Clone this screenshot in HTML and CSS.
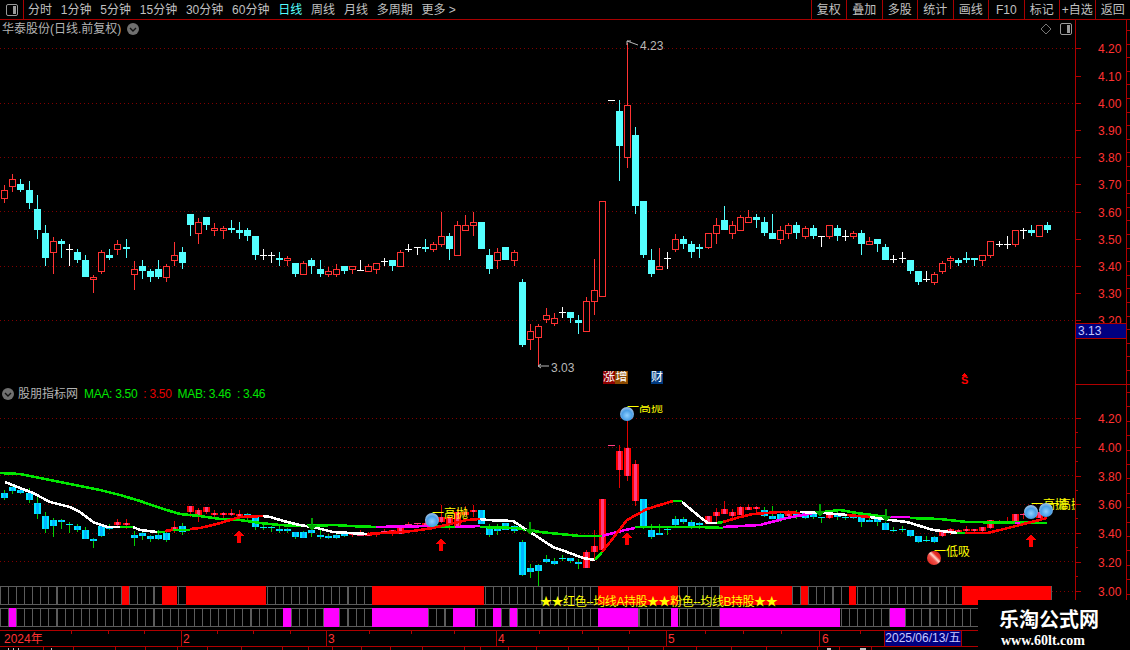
FILE: index.html
```html
<!DOCTYPE html>
<html lang="zh-CN">
<head>
<meta charset="utf-8">
<title>华泰股份 日线</title>
<link rel="stylesheet" href="styles.css">
</head>
<body>
<div class="app">
  <header class="toolbar">
    <div class="layout-btn"><svg class="panel-icon" viewBox="0 0 12 12"><rect x="0.5" y="0.5" width="11" height="11" rx="1.5"/><rect class="panel-fill" x="7" y="2" width="3" height="8"/></svg></div>
    <nav class="periods">
      <span>分时</span><span>1分钟</span><span>5分钟</span><span>15分钟</span><span>30分钟</span><span>60分钟</span><span class="active">日线</span><span>周线</span><span>月线</span><span>多周期</span><span>更多 &gt;</span>
    </nav>
    <nav class="actions">
      <span>复权</span><span>叠加</span><span>多股</span><span>统计</span><span>画线</span><span>F10</span><span>标记</span><span>+自选</span><span>返回</span>
    </nav>
  </header>

  <section class="pane pane-main">
    <div class="pane-title">
      <span class="stock-name">华泰股份(日线.前复权)</span>
      <svg class="chevron" viewBox="0 0 12 12"><circle cx="6" cy="6" r="6"/><path d="M3 5l3 3 3-3"/></svg>
    </div>
    <div class="pane-tools">
      <svg class="diamond" viewBox="0 0 12 12"><path d="M6 1l5 5-5 5-5-5z"/></svg>
      <svg class="panel-icon" viewBox="0 0 12 12"><rect x="0.5" y="0.5" width="11" height="11" rx="1.5"/><rect class="panel-fill" x="7" y="2" width="3" height="8"/></svg>
    </div>
    <svg id="main-chart" class="chart" width="1130" height="365" viewBox="0 20 1130 365"></svg>
    <div class="last-price">3.13</div>
    <div class="events">
      <span class="event event-a">涨</span><span class="event event-b">增</span><span class="event event-c">财</span>
    </div>
  </section>

  <section class="pane pane-sub">
    <div class="pane-title">
      <svg class="chevron" viewBox="0 0 12 12"><circle cx="6" cy="6" r="6"/><path d="M3 5l3 3 3-3"/></svg>
      <span class="stock-name">股朋指标网</span>
      <span class="legend green">MAA: 3.50</span><span class="legend red">: 3.50</span><span class="legend green">MAB: 3.46</span><span class="legend green">: 3.46</span>
    </div>
    <svg id="sub-chart" class="chart" width="1130" height="245" viewBox="0 385 1130 245"></svg>
    <div class="signal-note">★★红色--均线A持股★★粉色--均线B持股★★</div>
  </section>

  <section class="timeline">
    <svg id="time-axis" class="chart" width="1130" height="20" viewBox="0 630 1130 20"></svg>
    <div class="date-box">2025/06/13/五</div>
  </section>

  <aside class="watermark">
    <div class="wm-cn">乐淘公式网</div>
    <div class="wm-url">www.60lt.com</div>
  </aside>
</div>
<script src="chart.js"></script>
</body>
</html>
```

FILE: styles.css
```css
* { box-sizing: border-box; }
html, body { margin: 0; padding: 0; background: #000; }
body { font-family: "Liberation Sans", "Noto Sans CJK SC", sans-serif; font-size: 12px; color: #c0c0c0; }
.app { position: relative; width: 1130px; height: 650px; overflow: hidden; background: #000; }

.toolbar { display: flex; height: 20px; border-bottom: 1px solid #a80000; line-height: 20px; }
.layout-btn { width: 24px; display: flex; align-items: center; justify-content: center; border-right: 1px solid #a80000; }
.periods { display: flex; gap: 8.8px; padding-left: 4px; }
.periods .active { color: #54ffff; }
.actions { display: flex; margin-left: auto; }
.actions span { width: 35.5px; text-align: center; border-left: 1px solid #a80000; white-space: nowrap; }

.panel-icon { width: 12px; height: 12px; fill: none; stroke: #9a9a9a; }
.panel-fill { fill: #9a9a9a; stroke: none; }

.pane { position: relative; }
.pane-main { height: 365px; }
.pane-sub { height: 245px; }
.chart { display: block; shape-rendering: crispEdges; }
.pane-title { position: absolute; left: 2px; top: 2px; display: flex; align-items: center; height: 14px; line-height: 14px; z-index: 2; }
.pane-main .pane-title { gap: 6px; }
.stock-name { color: #b4b4b4; white-space: nowrap; }
.pane-sub .stock-name { margin: 0 6px 0 4px; }
.chevron { width: 12px; height: 12px; }
.chevron circle { fill: #707070; }
.chevron path { fill: none; stroke: #111; stroke-width: 1.4; }
.legend { margin-right: 6px; white-space: nowrap; letter-spacing: -0.3px; }
.green { color: #00e600; }
.red { color: #e60000; }
.pane-tools { position: absolute; right: 58px; top: 3px; display: flex; align-items: center; gap: 8px; z-index: 2; }
.diamond { width: 12px; height: 12px; fill: none; stroke: #777; }

.last-price { position: absolute; left: 1075px; top: 303px; width: 52px; height: 16px; padding-left: 2px; background: #000080; border: 1px solid #b00000; color: #c8c8ff; line-height: 14px; }
.events { position: absolute; left: 0; top: 351px; width: 1075px; height: 14px; }
.event { position: absolute; top: 0; width: 12px; height: 13px; line-height: 13px; text-align: center; color: #fff; overflow: hidden; font-size: 12px; }
.event-a { left: 603px; background: #900000; }
.event-b { left: 615px; width: 13px; background: #8c4a00; }
.event-c { left: 651px; background: #003a80; }

.signal-note { position: absolute; left: 540px; top: 210px; color: #ffff00; white-space: nowrap; line-height: 14px; letter-spacing: -0.45px; z-index: 2; }

.timeline { position: relative; height: 20px; }
.date-box { position: absolute; left: 884px; top: 1px; width: 78px; height: 15px; background: #000080; border-left: 1px solid #a80000; border-right: 1px solid #a80000; color: #c8c8ff; line-height: 15px; white-space: nowrap; text-align: center; }

.watermark { position: absolute; left: 978px; top: 600px; width: 152px; height: 50px; background: #000; z-index: 3; color: #fff; font-weight: 700; white-space: nowrap; }
.wm-cn { font-family: "Noto Sans CJK SC", sans-serif; font-size: 20px; line-height: 26px; margin-top: 6px; padding-left: 21px; }
.wm-url { font-family: "Liberation Serif", serif; font-size: 14px; line-height: 16px; padding-left: 23px; margin-top: 1px; }

svg text { font-family: "Liberation Sans", "Noto Sans CJK SC", sans-serif; font-size: 12px; shape-rendering: auto; }
.axis-label { fill: #ff3232; }
.tip { fill: #b8b8b8; }
.mark-label { fill: #ffff00; font-size: 12px; }
.axis-line { stroke: #b00000; fill: none; }
.grid { stroke: #800000; stroke-dasharray: 1 3; fill: none; }
.tip-line { stroke: #b8b8b8; fill: none; shape-rendering: auto; }
.dollar { fill: #ff0000; font-size: 11px; font-weight: 700; }
.ball { shape-rendering: auto; }
.ma { fill: none; stroke-width: 2.6; stroke-linejoin: round; }
.cell { fill: none; stroke: #5c5c5c; }
.arrow-up { fill: #ff0000; }
.arrow-down { fill: #00a000; }
```

FILE: chart.js
```js
// [type, high, top, bottom, low] in pixel rows of the upper pane; 0 rise, 1 fall, 2 flat
var D = [
[0,185,190,199,203],[0,174,179,187,192],[1,179,184,190,192],[1,181,190,203,209],[1,195,209,230,239],
[1,225,233,258,266],[0,237,241,253,274],[1,239,241,244,258],[2,244,249,249,266],[1,249,252,260,263],
[1,255,260,277,277],[0,275,277,280,293],[0,250,252,272,274],[1,249,255,258,260],[0,240,244,250,255],
[1,239,247,249,258],[0,261,269,275,290],[1,260,266,271,279],[1,269,271,277,282],[1,260,269,277,279],
[0,264,266,278,282],[0,242,255,261,266],[1,247,252,263,269],[1,214,214,225,236],[0,218,222,234,244],
[1,217,217,225,230],[0,223,228,231,236],[0,226,228,231,239],[1,220,228,230,233],[1,222,230,233,239],
[1,228,230,236,241],[1,236,236,255,260],[2,249,255,255,260],[2,252,255,255,263],[1,252,258,260,266],
[0,256,258,261,266],[1,263,263,274,277],[0,261,263,275,275],[1,258,260,266,274],[1,260,269,274,277],
[0,267,271,275,277],[0,264,269,275,277],[1,266,266,271,274],[0,266,266,270,274],[2,260,270,270,271],
[0,264,266,272,272],[0,263,263,270,274],[2,258,261,261,266],[1,260,260,266,271],[0,250,252,267,267],
[2,244,249,249,252],[2,247,247,247,255],[1,239,247,249,252],[0,242,244,250,252],[0,212,236,245,247],
[1,233,236,249,260],[0,221,225,256,256],[0,215,225,231,231],[0,212,222,226,236],[1,222,222,249,249],
[1,249,255,269,274],[0,248,252,261,269],[1,247,247,260,260],[0,250,252,261,266],[1,279,282,345,347],
[0,324,331,340,350],[0,324,326,338,366],[0,308,315,320,323],[0,313,318,324,326],[2,307,312,312,318],
[1,312,312,318,323],[1,315,320,323,334],[0,297,301,332,332],[0,259,290,302,315],[0,201,201,297,297],
[2,100,100,100,100],[1,100,111,146,181],[0,43,105,158,168],[1,127,135,206,214],[1,201,201,255,258],
[1,249,260,274,277],[0,248,266,270,270],[2,252,258,258,269],[0,234,239,250,252],[1,236,239,244,249],
[1,241,244,252,258],[1,244,247,249,258],[0,233,233,248,249],[0,218,225,234,244],[1,206,220,230,230],
[0,221,225,234,239],[0,215,217,231,231],[0,210,217,223,223],[1,214,217,220,228],[1,217,222,233,236],
[1,214,233,239,239],[0,226,230,240,244],[0,223,225,234,239],[1,222,225,233,239],[0,226,228,237,239],
[1,225,228,236,239],[2,236,236,236,247],[0,225,225,237,239],[1,225,228,236,241],[2,230,236,236,241],
[0,231,233,237,239],[1,230,233,244,255],[0,237,241,245,245],[1,239,239,244,252],[1,244,247,260,260],
[2,255,259,259,263],[2,252,258,258,263],[1,260,260,271,274],[1,271,271,282,285],[2,271,279,279,282],
[0,272,274,283,285],[0,261,263,272,274],[0,256,258,261,269],[1,258,260,263,266],[1,252,258,260,263],
[1,258,258,260,266],[0,255,255,261,266],[0,241,241,256,258],[2,241,244,244,247],[2,236,244,244,249],
[0,230,230,245,247],[2,228,230,230,239],[1,225,230,233,236],[0,225,225,237,237],[1,222,225,230,233]
];

// candle runs painted pink in the indicator pane
var PINK = [[14,15],[21,21],[23,29],[43,58],[72,78],[87,93],[97,97],[102,102],[116,129]];
function isPink(i) { return PINK.some(function (r) { return i >= r[0] && i <= r[1]; }); }

function X(i) { return Math.round(4.33 + i * 8.083); }
function low(y) { return Math.round(418 + (y - 48.3) * 0.5294); }
function el(tag, attrs, text) {
  var s = '<' + tag;
  for (var k in attrs) s += ' ' + k + '="' + attrs[k] + '"';
  return s + '>' + (text || '') + '</' + tag + '>';
}
function rect(x, y, w, h, fill) { return el('rect', { x: x, y: y, width: w, height: h, fill: fill }); }
function hline(x1, x2, y, cls) { return el('line', { x1: x1, x2: x2, y1: y + .5, y2: y + .5, 'class': cls }); }
function vline(x, y1, y2, cls) { return el('line', { x1: x + .5, x2: x + .5, y1: y1, y2: y2, 'class': cls }); }
function label(x, y, t, cls) { return el('text', { x: x, y: y, 'class': cls }, t); }

// ---------- upper pane ----------
var RED = '#ff3232', CYAN = '#54ffff', WHITE = '#ffffff';
var m = '';
[48, 103, 157, 211, 266, 320].forEach(function (y) { m += hline(0, 1075, y, 'grid'); });
D.forEach(function (c, i) {
  var x = X(i), col = [RED, CYAN, WHITE][c[0]];
  if (c[4] > c[1]) m += rect(x, c[1], 1, c[4] - c[1], col);
  if (c[0] === 2) m += rect(x - 3, c[2], 7, 1, col);
  else if (c[0] === 1) m += rect(x - 3, c[2], 7, c[3] - c[2], col);
  else m += rect(x - 3, c[2], 7, c[3] - c[2], '#000') +
    el('rect', { x: x - 2.5, y: c[2] + .5, width: 6, height: c[3] - c[2] - 1, fill: 'none', stroke: col });
});
// high and low tips
m += el('path', { d: 'M627 41 l11 4 M627 41 v4 M627 41 h4', 'class': 'tip-line' }) + label(640, 50, '4.23', 'tip');
m += el('path', { d: 'M538 366 h11 M538 366 l3 -2 M538 366 l3 2', 'class': 'tip-line' }) + label(551, 372, '3.03', 'tip');
// dollar event
m += el('path', { d: 'M964 373l3 3h-6z', fill: '#f00' }) + label(961, 384, 'S', 'dollar');
// axis
m += vline(1075, 20, 385, 'axis-line') + vline(1126, 20, 385, 'axis-line') + hline(0, 1130, 385, 'axis-line');
m += hline(1076, 1126, 384, 'axis-line');
for (var k = 0; k <= 10; k++) {
  var y = Math.round(48.3 + k * 27.2);
  m += hline(1075, 1081, y, 'axis-line');
  m += label(1098, y + 5, (4.2 - k * 0.1).toFixed(2), 'axis-label');
}
for (var r = 30; r < 385; r += 13.6) m += hline(1126, 1130, Math.round(r), 'axis-line');
document.getElementById('main-chart').innerHTML = m;

// ---------- lower pane ----------
var s = '';
[418, 447, 475, 504, 533, 561].forEach(function (y) { s += hline(0, 1075, y, 'grid'); });
D.forEach(function (c, i) {
  var x = X(i), t = low(c[2]), b = low(c[3]), h = low(c[1]), l = low(c[4]);
  var pink = isPink(i), H = Math.max(b - t, c[0] === 2 ? 1 : 2);
  if (l > h) s += rect(x, h, 1, l - h, pink ? '#e00000' : '#00d000');
  if (c[0] === 2) s += rect(x - 3, t, 7, 1, pink ? '#ff3c82' : '#00e8ff');
  else if (pink) s += rect(x - 3, t, 7, H, '#ff0000') + rect(x - 1, t, 3, H, '#ff3c82');
  else s += rect(x - 3, t, 7, H, '#00e8ff') + rect(x - 1, t, 3, H, '#00b4ff');
});
// moving averages, each run [colour, points]
var G1 = '#00e600', M1 = '#ff00ff', R1 = '#ff0000', W1 = '#ffffff';
var runs = [
[G1,[[0,473],[20,474],[40,478],[60,482],[80,486],[100,490],[120,495],[140,501],[160,508],[180,514],[200,516],[220,519],[240,520],[260,523],[280,525],[300,526],[335,525],[350,526],[376,527]]],
[M1,[[376,527],[430,526]]],
[G1,[[430,526],[455,527],[470,527]]],
[M1,[[455,527],[480,526]]],
[G1,[[480,527],[516,528],[540,532],[580,536],[602,536]]],
[M1,[[602,536],[625,530],[635,528]]],
[G1,[[635,527],[700,527],[723,528]]],
[M1,[[723,527],[760,525],[787,518],[813,513],[823,512]]],
[G1,[[823,512],[840,510],[857,513],[887,517]]],
[M1,[[887,517],[910,517]]],
[G1,[[910,518],[940,519],[967,522],[1047,523]]],
[M1,[[1015,523],[1020,523]]],
[W1,[[5,482],[20,488],[33,493],[50,502],[70,507],[80,512],[93,522],[107,527],[120,527]]],
[G1,[[120,527],[133,527]]],
[W1,[[133,527],[140,530],[157,532]]],
[G1,[[157,532],[165,532]]],
[R1,[[165,531],[173,530]]],
[G1,[[173,530],[190,530]]],
[R1,[[190,529],[200,528],[217,524],[230,520],[240,517],[263,516]]],
[W1,[[263,516],[270,517],[287,522],[300,525],[317,528],[333,532],[367,534]]],
[R1,[[367,534],[400,532],[413,531],[433,528],[450,524],[467,520],[480,519]]],
[W1,[[480,519],[487,520],[513,521],[530,532],[553,547],[567,552],[583,558],[595,560]]],
[G1,[[595,560],[602,552]]],
[R1,[[602,552],[610,542],[627,520],[647,509],[673,501]]],
[G1,[[673,501],[682,501]]],
[W1,[[682,502],[700,517],[708,523],[717,523]]],
[G1,[[717,523],[723,522]]],
[R1,[[723,522],[740,517],[753,514],[780,512],[800,513]]],
[W1,[[800,512],[823,513],[847,515]]],
[R1,[[847,515],[870,517]]],
[W1,[[870,517],[890,520],[907,522],[933,530],[957,533]]],
[G1,[[957,533],[965,533]]],
[R1,[[965,533],[987,533],[1000,530],[1020,525],[1047,518]]]
];
runs.forEach(function (r) {
  s += el('polyline', { points: r[1].map(function (p) { return p.join(','); }).join(' '), stroke: r[0], 'class': 'ma' });
});
// arrows
[[239, 530], [441, 538], [627, 532], [1031, 534]].forEach(function (a) {
  s += el('path', { d: 'M' + a[0] + ' ' + a[1] + 'l5 6h-3v7h-4v-7h-3z', 'class': 'arrow-up' });
});
[[312, 518], [530, 522], [820, 504], [886, 509]].forEach(function (a) {
  s += el('path', { d: 'M' + (a[0] - 1) + ' ' + a[1] + 'h2v7h4l-5 6 -5 -6h4z', 'class': 'arrow-down' });
});
// labels
s += '<defs>' +
  '<clipPath id="clip-top"><rect x="600" y="405" width="80" height="8"/></clipPath>' +
  '<clipPath id="clip-chart"><rect x="0" y="385" width="1075" height="245"/></clipPath>' +
  '<radialGradient id="blue-ball" cx="50%" cy="60%" r="60%"><stop offset="0" stop-color="#8fd0ff"/><stop offset=".6" stop-color="#4a9fe6"/><stop offset="1" stop-color="#a8c4e4"/></radialGradient>' +
  '<linearGradient id="red-ball" x1="0" y1="1" x2="1" y2="0"><stop offset="0" stop-color="#d81810"/><stop offset=".42" stop-color="#f05048"/><stop offset=".55" stop-color="#ffd8d0"/><stop offset=".68" stop-color="#e83028"/><stop offset="1" stop-color="#c81410"/></linearGradient>' +
  '</defs>';
s += el('text', { x: 627, y: 412, 'class': 'mark-label', 'clip-path': 'url(#clip-top)' }, '一高抛');
s += label(432, 518, '一高抛', 'mark-label');
s += el('text', { x: 1031, y: 509, 'class': 'mark-label', 'clip-path': 'url(#clip-chart)' }, '一高抛');
s += el('text', { x: 1047, y: 509, 'class': 'mark-label', 'clip-path': 'url(#clip-chart)' }, '一高抛');
s += label(934, 556, '一低吸', 'mark-label');
[[432, 520], [627, 414], [1031, 512], [1046, 510]].forEach(function (b) {
  s += el('circle', { cx: b[0], cy: b[1], r: 7, fill: 'url(#blue-ball)', 'class': 'ball' });
});
s += el('circle', { cx: 934, cy: 558, r: 7, fill: 'url(#red-ball)', 'class': 'ball' });
// signal strips
var rowA = [[122,129],[162,177],[186,266],[372,484],[598,678],[720,792],[801,808],[849,856],[962,1051]];
var rowB = [[9,16],[283,291],[324,339],[372,428],[453,475],[493,501],[510,517],[598,638],[671,678],[720,840],[890,905]];
function strip(y, h, end, fills, colour) {
  var o = '';
  for (var px = 0; px < end; px += 8.083) {
    o += el('rect', { x: Math.round(px) + .5, y: y + .5, width: 8, height: h - 1, 'class': 'cell' });
  }
  fills.forEach(function (f) { o += rect(f[0], y, f[1] - f[0], h, colour); });
  return o;
}
s += strip(586, 19, 1043, rowA, '#ff0000');
s += strip(608, 19, 978, rowB, '#ff00ff');
// axis
s += vline(1075, 385, 630, 'axis-line') + vline(1126, 385, 630, 'axis-line');
s += el('line', { x1: 1052, x2: 1081, y1: 591.5, y2: 591.5, 'class': 'grid' });
for (var j = 0; j <= 6; j++) {
  var yy = Math.round(418 + j * 28.8);
  s += hline(1075, 1081, yy, 'axis-line');
  if (j < 6) s += hline(1075, 1078, Math.round(yy + 14.4), 'axis-line');
  s += label(1098, yy + 5, (4.2 - j * 0.2).toFixed(2), 'axis-label');
}
for (var q = 392; q < 630; q += 14.4) s += hline(1126, 1130, Math.round(q), 'axis-line');
document.getElementById('sub-chart').innerHTML = s;

// ---------- time axis ----------
var t = hline(0, 1130, 630, 'axis-line') + hline(0, 1130, 646, 'axis-line');
[71,108,144,217,253,290,369,411,454,539,582,629,705,743,781,860].forEach(function (x) { t += vline(x, 630, 634, 'axis-line'); });
[181,326,496,666,819].forEach(function (x) { t += vline(x, 630, 646, 'axis-line'); });
[43,73,115,145,177,207,241,282,308,332,361,390,422,464,480,508,536,568,598,628,663,696,731,766,817,839,871].forEach(function (x) { t += vline(x, 646, 650, 'axis-line'); });
[[8,1],[13,1],[18,1],[51,1],[827,4],[860,6]].forEach(function (d) { t += rect(d[0], 648, d[1], 2, '#c0c0c0'); });
t += label(4, 643, '2024年', 'axis-label') + label(183, 643, '2', 'axis-label') + label(328, 643, '3', 'axis-label') +
     label(498, 643, '4', 'axis-label') + label(668, 643, '5', 'axis-label') + label(822, 643, '6', 'axis-label');
document.getElementById('time-axis').innerHTML = t;
```
